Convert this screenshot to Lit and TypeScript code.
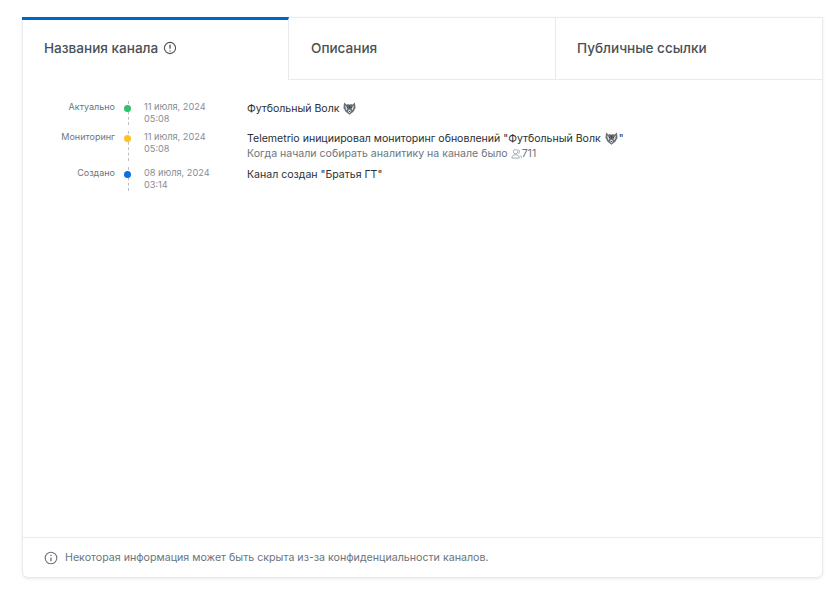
import { LitElement, html, css, svg } from "lit";
import { customElement } from "lit/decorators.js";

const wolf = svg`<svg class="wolf" viewBox="0 0 12 12" width="13" height="13" aria-hidden="true">
  <path d="M1 .4 3.4 2.6 4.6 1.8 6 2.6 7.4 1.8 8.6 2.6 11 .4l.6 5.2L9.6 9 6 11.8 2.4 9 .4 5.6z" fill="#6a7076"/>
  <path d="M1.8 3 4.6 6 3 7.6zM10.2 3 7.4 6 9 7.6zM4.4 8.4 6 7l1.6 1.4L6 10.6zM.9 5.8 2 8l-.5-.2zM11.1 5.8 10 8l.5-.2z" fill="#e6e8eb"/>
  <path d="M5.1 3.2h1.8L6 6.6z" fill="#3a3f45"/>
  <circle cx="4.1" cy="5.4" r=".6" fill="#15181b"/><circle cx="7.9" cy="5.4" r=".6" fill="#15181b"/>
  <path d="M5.3 8.4h1.4L6 9.4z" fill="#15181b"/>
</svg>`;

@customElement("app-root")
export class AppRoot extends LitElement {
  static styles = css`
    :host { display: block; height: 591px; background: #fff; font-family: Inter, "Noto Sans", sans-serif; padding: 17px 14px 13px 22px; box-sizing: border-box; }
    .card { height: 561px; width: 801px; box-sizing: border-box; background: #fff; border-radius: 0 0 6px 6px; box-shadow: inset 0 0 0 1px #e8eaed, 0 1px 3px rgba(160,170,185,.25); display: flex; flex-direction: column; }
    .tabs { display: flex; height: 63px; flex: none; }
    .tab { width: 267px; flex: none; box-sizing: border-box; display: flex; align-items: center; gap: 5px; padding: 0 22px 1px; font-size: 13.55px; font-weight: 500; color: #495057; border-bottom: 1px solid #e8eaed; border-top: 1px solid #e8eaed; }
    .tab:not(:last-child) { border-right: 1px solid #e8eaed; }
    .tab:last-child { padding-left: 21px; }
    .tab.active { border-top: 3px solid #0066cc; border-bottom: none; padding-bottom: 4px; }
    .body { flex: 1; padding: 21px 0 0; }
    .row { display: grid; grid-template-columns: 93px 25px 107px 1fr; padding-bottom: 6px; line-height: 12px; }
    .label { text-align: right; color: #6c757d; font-size: 9px; line-height: 12px; }
    .rail { position: relative; }
    .line { position: absolute; left: 13px; top: 0; bottom: 0; border-left: 1px dashed #b8c0c8; }
    .dot { position: absolute; left: 9px; top: 4px; width: 7px; height: 7px; border-radius: 50%; }
    .date { color: #868e96; font-size: 9.2px; padding-left: 4px; }
    .text { color: #2b3035; font-size: 10.55px; line-height: 15px; }
    .sub { color: #6c757d; display: flex; align-items: center; }
    .wolf { vertical-align: 1px; margin: -4px 1px; }
    .foot { flex: none; height: 41px; box-sizing: border-box; display: flex; align-items: center; gap: 7px; padding: 0 0 1px 22px; border-top: 1px solid #e8eaed; font-size: 10.65px; color: #6c757d; }
    svg.ic { flex: none; }
  `;

  render() {
    const rows = [
      { label: "Актуально", color: "#2fc26a", d: "11 июля, 2024", t: "05:08", body: html`Футбольный Волк ${wolf}` },
      { label: "Мониторинг", color: "#fcc21f", d: "11 июля, 2024", t: "05:08", body: html`<div>Telemetrio инициировал мониторинг обновлений "Футбольный Волк ${wolf}"</div><div class="sub">Когда начали собирать аналитику на канале было <svg class="ic people" viewBox="0 0 12 12" width="11" height="11" fill="none" stroke="#868e96" stroke-width=".8" style="margin-left:3px"><circle cx="5" cy="4" r="2.4"/><path d="M1 11c0-2.5 1.6-3.6 4-3.6s4 1.1 4 3.6H1zM8.2 1.8c1.4.4 1.4 3.8 0 4.2M10 8c1 .5 1.4 1.5 1.4 3"/></svg>711</div>` },
      { label: "Создано", color: "#0a6fe0", d: "08 июля, 2024", t: "03:14", body: html`Канал создан "Братья ГТ"` },
    ];
    return html`<div class="card">
      <div class="tabs">
        <div class="tab active">Названия канала
          <svg class="ic" viewBox="0 0 14 14" width="14" height="14" fill="none" stroke="#495057" stroke-width="1.1"><circle cx="7" cy="7" r="5.6"/><path d="M7 3.8v4M7 9.4v1" stroke-width="1.3"/></svg>
        </div>
        <div class="tab">Описания</div>
        <div class="tab">Публичные ссылки</div>
      </div>
      <div class="body">
        ${rows.map(r => html`<div class="row">
          <div class="label">${r.label}</div>
          <div class="rail"><span class="line"></span><span class="dot" style="background:${r.color}"></span></div>
          <div class="date">${r.d}<br>${r.t}</div>
          <div class="text">${r.body}</div>
        </div>`)}
      </div>
      <div class="foot">
        <svg class="ic" viewBox="0 0 14 14" width="14" height="14" fill="none" stroke="#6c757d" stroke-width="1.1"><circle cx="7" cy="7" r="5.8"/><path d="M7 6.4v3.8M7 3.8v1.1" stroke-width="1.3"/></svg>
        <span>Некоторая информация может быть скрыта из-за конфиденциальности каналов.</span>
      </div>
    </div>`;
  }
}
